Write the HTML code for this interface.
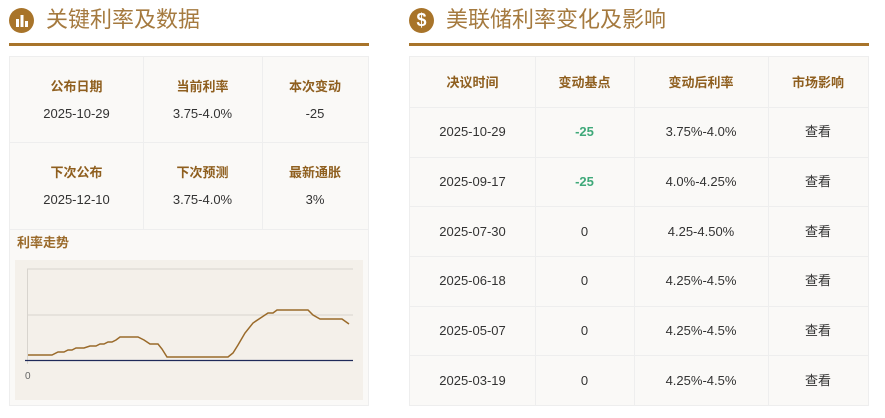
<!DOCTYPE html>
<html><head><meta charset="utf-8"><style>
*{margin:0;padding:0;box-sizing:border-box}
body{width:885px;height:418px;background:#fff;font-family:"Liberation Sans","Noto Sans CJK SC",sans-serif;position:relative;overflow:hidden;color:#333}
.ic{position:absolute;top:8px;width:25px;height:25px;border-radius:50%;background:#a8742a}
.tt{position:absolute;top:6px;font-size:22px;color:#a57a3f;line-height:28px}
.ln{position:absolute;top:43px;height:3px;background:#a8742a}
.box{position:absolute;background:#faf9f7;border:1px solid #eee}
.c{position:absolute;text-align:center;font-size:13px;line-height:16px;height:16px}
.h{color:#8f5f1f;font-weight:bold}
.vl{position:absolute;width:1px;background:#eee}
.hl{position:absolute;height:1px;background:#eee}
</style></head><body>
<div class="ic" style="left:9px"><svg width="25" height="25"><rect x="7" y="11" width="3" height="8" fill="#fff"/><rect x="11.5" y="7" width="3" height="12" fill="#fff"/><rect x="16" y="13" width="3" height="6" fill="#fff"/></svg></div>
<div class="tt" style="left:46px">关键利率及数据</div>
<div class="ln" style="left:9px;width:360px"></div>
<div class="box" style="left:9px;top:56px;width:360px;height:350px"></div>
<div class="vl" style="left:143px;top:57px;height:172px"></div>
<div class="vl" style="left:262px;top:57px;height:172px"></div>
<div class="hl" style="left:10px;top:142px;width:358px"></div>
<div class="hl" style="left:10px;top:229px;width:358px"></div>
<div class="c h" style="left:10px;width:133px;top:79px">公布日期</div>
<div class="c h" style="left:143px;width:119px;top:79px">当前利率</div>
<div class="c h" style="left:262px;width:106px;top:79px">本次变动</div>
<div class="c" style="left:10px;width:133px;top:106px">2025-10-29</div>
<div class="c" style="left:143px;width:119px;top:106px">3.75-4.0%</div>
<div class="c" style="left:262px;width:106px;top:106px">-25</div>
<div class="c h" style="left:10px;width:133px;top:165px">下次公布</div>
<div class="c h" style="left:143px;width:119px;top:165px">下次预测</div>
<div class="c h" style="left:262px;width:106px;top:165px">最新通胀</div>
<div class="c" style="left:10px;width:133px;top:192px">2025-12-10</div>
<div class="c" style="left:143px;width:119px;top:192px">3.75-4.0%</div>
<div class="c" style="left:262px;width:106px;top:192px">3%</div>
<div style="position:absolute;left:17px;top:235px;font-size:13px;line-height:16px;font-weight:bold;color:#9a6a2a">利率走势</div>
<svg style="position:absolute;left:0;top:0" width="885" height="418">
<rect x="15" y="260" width="348" height="140" fill="#f4f0ea"/>
<line x1="27" y1="269" x2="353" y2="269" stroke="#d8d4ce"/>
<line x1="27" y1="315" x2="353" y2="315" stroke="#d8d4ce"/>
<line x1="27.5" y1="269" x2="27.5" y2="364" stroke="#d8d4ce"/>
<line x1="25" y1="360.5" x2="353" y2="360.5" stroke="#1f2a5a" stroke-width="1.2"/>
<text x="25" y="379" font-size="10" fill="#666" font-family="Liberation Sans">0</text>
<polyline fill="none" stroke="#9a6a2a" stroke-width="1.5" points="28,355 52,355 58,352 64,352 68,350 72,350 76,348 84,348 90,346 96,346 100,344 104,344 108,342 112,342 116,340 120,337 138,337 144,340 150,344 158,344 162,349 167,357 228,357 233,353 238,345 245,333 253,323 262,317 268,313 273,313 277,310 308,310 313,315 320,319 342,319 349,324"/>
</svg>

<div class="ic" style="left:409px;text-align:center;color:#fff;font-weight:bold;font-size:18px;line-height:25px">$</div>
<div class="tt" style="left:446px">美联储利率变化及影响</div>
<div class="ln" style="left:409px;width:460px"></div>
<div class="box" style="left:409px;top:56px;width:460px;height:350px"></div>
<div class="vl" style="left:535px;top:57px;height:348px"></div>
<div class="vl" style="left:634px;top:57px;height:348px"></div>
<div class="vl" style="left:768px;top:57px;height:348px"></div>
<div class="hl" style="left:410px;top:107px;width:458px"></div>
<div class="hl" style="left:410px;top:157px;width:458px"></div>
<div class="hl" style="left:410px;top:206px;width:458px"></div>
<div class="hl" style="left:410px;top:256px;width:458px"></div>
<div class="hl" style="left:410px;top:306px;width:458px"></div>
<div class="hl" style="left:410px;top:355px;width:458px"></div>
<div class="c h" style="left:410px;width:125px;top:75px">决议时间</div>
<div class="c h" style="left:535px;width:99px;top:75px">变动基点</div>
<div class="c h" style="left:634px;width:134px;top:75px">变动后利率</div>
<div class="c h" style="left:768px;width:100px;top:75px">市场影响</div>

<div class="c" style="left:410px;width:125px;top:124px">2025-10-29</div>
<div class="c" style="left:535px;width:99px;top:124px;color:#3fa97a;font-weight:bold">-25</div>
<div class="c" style="left:634px;width:134px;top:124px">3.75%-4.0%</div>
<div class="c" style="left:768px;width:100px;top:124px">查看</div>

<div class="c" style="left:410px;width:125px;top:174px">2025-09-17</div>
<div class="c" style="left:535px;width:99px;top:174px;color:#3fa97a;font-weight:bold">-25</div>
<div class="c" style="left:634px;width:134px;top:174px">4.0%-4.25%</div>
<div class="c" style="left:768px;width:100px;top:174px">查看</div>

<div class="c" style="left:410px;width:125px;top:224px">2025-07-30</div>
<div class="c" style="left:535px;width:99px;top:224px">0</div>
<div class="c" style="left:634px;width:134px;top:224px">4.25-4.50%</div>
<div class="c" style="left:768px;width:100px;top:224px">查看</div>

<div class="c" style="left:410px;width:125px;top:273px">2025-06-18</div>
<div class="c" style="left:535px;width:99px;top:273px">0</div>
<div class="c" style="left:634px;width:134px;top:273px">4.25%-4.5%</div>
<div class="c" style="left:768px;width:100px;top:273px">查看</div>

<div class="c" style="left:410px;width:125px;top:323px">2025-05-07</div>
<div class="c" style="left:535px;width:99px;top:323px">0</div>
<div class="c" style="left:634px;width:134px;top:323px">4.25%-4.5%</div>
<div class="c" style="left:768px;width:100px;top:323px">查看</div>

<div class="c" style="left:410px;width:125px;top:373px">2025-03-19</div>
<div class="c" style="left:535px;width:99px;top:373px">0</div>
<div class="c" style="left:634px;width:134px;top:373px">4.25%-4.5%</div>
<div class="c" style="left:768px;width:100px;top:373px">查看</div>
</body></html>
